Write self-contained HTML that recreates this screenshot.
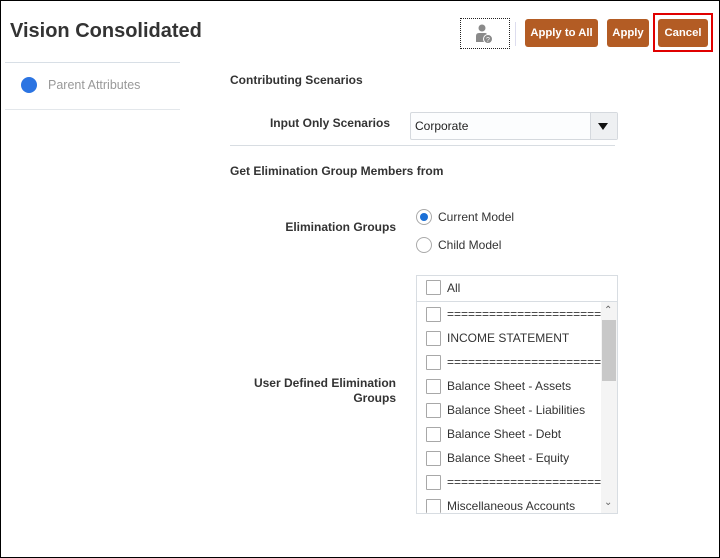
<!DOCTYPE html>
<html><head><style>
*{box-sizing:border-box;margin:0;padding:0}
body{width:720px;height:558px;position:relative;font-family:"Liberation Sans",Arial,sans-serif;background:#fff;overflow:hidden}
.frame{position:absolute;left:0;top:0;width:720px;height:558px;border:1px solid #000}
.a{position:absolute;white-space:nowrap}
.btn{position:absolute;background:#b35c24;color:#fff;font-weight:bold;font-size:11.3px;border-radius:3px;text-align:center;line-height:28px}
.lbl{position:absolute;font-size:12px;font-weight:bold;color:#333;white-space:nowrap}
.cb{position:absolute;left:426px;width:15px;height:15px;border:1px solid #a8a8a8;background:#fff;border-radius:1px}
.it{position:absolute;left:447px;font-size:12px;color:#333;white-space:nowrap}
</style></head><body>
<div class="frame"></div>
<div class="a" style="left:10px;top:20px;font-size:20px;font-weight:bold;color:#333">Vision Consolidated</div>
<div class="a" style="left:5px;top:62px;width:175px;height:1px;background:#d8dfe6"></div>
<div class="a" style="left:5px;top:109px;width:175px;height:1px;background:#e3e7eb"></div>
<div class="a" style="left:21px;top:77px;width:16px;height:16px;border-radius:50%;background:#2b74e2"></div>
<div class="a" style="left:48px;top:78px;font-size:12.5px;color:#999">Parent Attributes</div>

<div class="a" style="left:460px;top:18px;width:50px;height:31px;border:1px dotted #222"></div>
<svg class="a" style="left:474px;top:23px" width="20" height="22" viewBox="0 0 20 22">
<circle cx="8" cy="5" r="3.5" fill="#8a8a8a"/>
<path d="M2 19 V13 Q2 10 5 10 H11 Q13 10 13 12 V19 Z" fill="#8a8a8a"/>
<circle cx="14" cy="16" r="4.5" fill="#8a8a8a" stroke="#fff" stroke-width="1"/>
<text x="14" y="19" font-size="7" fill="#fff" text-anchor="middle" font-family="Liberation Sans">?</text>
</svg>
<div class="a" style="left:515px;top:22px;width:1px;height:24px;background:#dde"></div>
<div class="btn" style="left:525px;top:19px;width:73px">Apply to All</div>
<div class="btn" style="left:607px;top:19px;width:42px">Apply</div>
<div class="a" style="left:653px;top:13px;width:60px;height:39px;border:2px solid #e00000"></div>
<div class="btn" style="left:658px;top:19px;width:50px">Cancel</div>

<div class="lbl" style="left:230px;top:73px">Contributing Scenarios</div>
<div class="lbl" style="left:230px;top:116px;width:160px;text-align:right">Input Only Scenarios</div>
<div class="a" style="left:410px;top:112px;width:208px;height:28px;border:1px solid #d5d9de;background:#fcfdfe;border-radius:2px"></div>
<div class="a" style="left:415px;top:119px;font-size:12px;color:#222">Corporate</div>
<div class="a" style="left:590px;top:113px;width:27px;height:26px;background:#eef0f2;border-left:1px solid #d5d9de"></div>
<div class="a" style="left:598px;top:123px;width:0;height:0;border-left:5px solid transparent;border-right:5px solid transparent;border-top:7px solid #111"></div>
<div class="a" style="left:230px;top:145px;width:385px;height:1px;background:#d8dde2"></div>
<div class="lbl" style="left:230px;top:164px">Get Elimination Group Members from</div>
<div class="lbl" style="left:230px;top:220px;width:166px;text-align:right">Elimination Groups</div>
<div class="a" style="left:416px;top:209px;width:16px;height:16px;border:1px solid #aaa;border-radius:50%;background:#fff"></div>
<div class="a" style="left:420px;top:213px;width:8px;height:8px;border-radius:50%;background:#1a6fd6"></div>
<div class="a" style="left:438px;top:210px;font-size:12px;color:#333">Current Model</div>
<div class="a" style="left:416px;top:237px;width:16px;height:16px;border:1px solid #aaa;border-radius:50%;background:#fff"></div>
<div class="a" style="left:438px;top:238px;font-size:12px;color:#333">Child Model</div>

<div class="lbl" style="left:230px;top:376px;width:166px;text-align:right;white-space:normal;line-height:15px">User Defined Elimination<br>Groups</div>

<div class="a" style="left:416px;top:275px;width:202px;height:239px;border:1px solid #d8dde2"></div>
<div class="a" style="left:417px;top:301px;width:200px;height:1px;background:#d8dde2"></div>
<div class="cb" style="top:280px"></div><div class="it" style="top:281px">All</div>
<div class="a" style="left:601px;top:302px;width:16px;height:211px;background:#f4f4f4"></div>
<div class="a" style="left:602px;top:320px;width:14px;height:61px;background:#c8c8c8"></div>
<div class="a" style="left:604px;top:305px;font-size:10px;color:#666">&#8963;</div>
<div class="a" style="left:604px;top:497px;font-size:10px;color:#666">&#8964;</div>
<div class="cb" style="top:307px"></div><div class="it" style="top:307px;width:154px;overflow:hidden">==========================</div>
<div class="cb" style="top:331px"></div><div class="it" style="top:331px">INCOME STATEMENT</div>
<div class="cb" style="top:355px"></div><div class="it" style="top:355px;width:154px;overflow:hidden">==========================</div>
<div class="cb" style="top:379px"></div><div class="it" style="top:379px">Balance Sheet - Assets</div>
<div class="cb" style="top:403px"></div><div class="it" style="top:403px">Balance Sheet - Liabilities</div>
<div class="cb" style="top:427px"></div><div class="it" style="top:427px">Balance Sheet - Debt</div>
<div class="cb" style="top:451px"></div><div class="it" style="top:451px">Balance Sheet - Equity</div>
<div class="cb" style="top:475px"></div><div class="it" style="top:475px;width:154px;overflow:hidden">==========================</div>
<div class="cb" style="top:499px;height:14px;border-bottom:none"></div><div class="it" style="top:499px">Miscellaneous Accounts</div>
</body></html>
